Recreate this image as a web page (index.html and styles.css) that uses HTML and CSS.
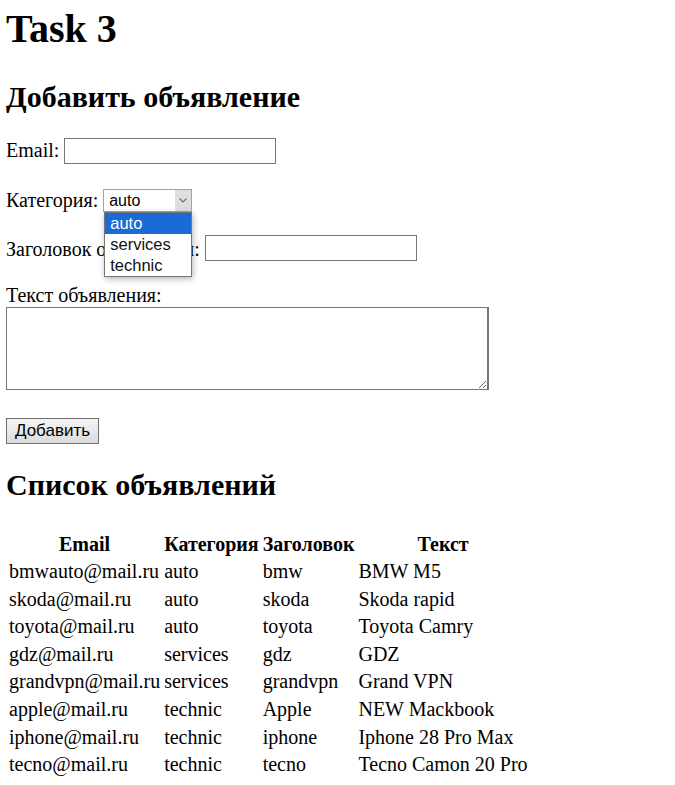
FILE: index.html
```html
<!DOCTYPE html>
<html lang="ru">
<head>
<meta charset="utf-8">
<title>Task 3</title>
<link rel="stylesheet" href="styles.css">
</head>
<body>
<h1 class="page-title">Task 3</h1>
<h2 class="section-title section-title--form">Добавить объявление</h2>
<form class="ad-form">
  <div class="form-row form-row--email">
    <label class="form-label form-label--email">Email:</label>
    <input class="text-input" type="text">
  </div>
  <div class="form-row form-row--category">
    <label class="form-label">Категория:</label>
    <div class="fake-select">
      <span class="fake-select__value">auto</span>
      <span class="fake-select__arrow">
        <svg width="8" height="5" viewBox="0 0 8 5"><path d="M0.5 0.5 L4 4 L7.5 0.5" fill="none" stroke="#6d6d6d" stroke-width="1.1"/></svg>
      </span>
      <ul class="dropdown">
        <li class="dropdown__item dropdown__item--active">auto</li>
        <li class="dropdown__item">services</li>
        <li class="dropdown__item">technic</li>
      </ul>
    </div>
  </div>
  <div class="form-row form-row--heading">
    <label class="form-label form-label--heading">Заголовок объявления:</label>
    <input class="text-input" type="text">
  </div>
  <label class="block-label">Текст объявления:</label>
  <textarea class="text-area"></textarea>
  <button class="submit-btn" type="button">Добавить</button>
</form>
<h2 class="section-title section-title--list">Список объявлений</h2>
<table class="ads-table">
  <thead>
    <tr><th>Email</th><th>Категория</th><th>Заголовок</th><th>Текст</th></tr>
  </thead>
  <tbody>
    <tr><td>bmwauto@mail.ru</td><td>auto</td><td>bmw</td><td>BMW M5</td></tr>
    <tr><td>skoda@mail.ru</td><td>auto</td><td>skoda</td><td>Skoda rapid</td></tr>
    <tr><td>toyota@mail.ru</td><td>auto</td><td>toyota</td><td>Toyota Camry</td></tr>
    <tr><td>gdz@mail.ru</td><td>services</td><td>gdz</td><td>GDZ</td></tr>
    <tr><td>grandvpn@mail.ru</td><td>services</td><td>grandvpn</td><td>Grand VPN</td></tr>
    <tr><td>apple@mail.ru</td><td>technic</td><td>Apple</td><td>NEW Mackbook</td></tr>
    <tr><td>iphone@mail.ru</td><td>technic</td><td>iphone</td><td>Iphone 28 Pro Max</td></tr>
    <tr><td>tecno@mail.ru</td><td>technic</td><td>tecno</td><td>Tecno Camon 20 Pro</td></tr>
  </tbody>
</table>
</body>
</html>
```
FILE: styles.css
```css
html, body {
  background: #ffffff;
}
body {
  margin: 0;
  padding: 0 6px;
  font-family: "Liberation Serif", "Times New Roman", serif;
  font-size: 20px;
  color: #000;
}
.page-title {
  margin: 6px 0 0;
  font-size: 40px;
  line-height: 46px;
  font-weight: bold;
}
.section-title {
  margin: 0;
  font-size: 30px;
  line-height: 34px;
  font-weight: bold;
}
.section-title--form {
  margin-top: 28px;
}
.section-title--list {
  margin-top: 24px;
}
.ad-form {
  display: flex;
  flex-direction: column;
  align-items: flex-start;
  margin-top: 24px;
}
.form-row {
  display: flex;
  align-items: flex-start;
  gap: 5px;
}
.form-row--category {
  margin-top: 25px;
}
.form-row--heading {
  margin-top: 23px;
}
.form-label {
  line-height: 22px;
  white-space: nowrap;
}
.form-label--email {
  margin-top: 1px;
}
.form-label--heading {
  margin-top: 3px;
}
.text-input {
  box-sizing: border-box;
  width: 212px;
  height: 26px;
  margin: 0;
  padding: 0 3px;
  border: 1px solid #767676;
  border-radius: 0;
  background: #fff;
  font: 16px "Liberation Sans", Arial, sans-serif;
}
.fake-select {
  position: relative;
  box-sizing: border-box;
  width: 89px;
  height: 23px;
  border: 1px solid #7aaed3;
  background: #fff;
  display: flex;
  align-items: center;
  font: 16px/21px "Liberation Sans", Arial, sans-serif;
}
.fake-select__value {
  flex: 1;
  padding-left: 5px;
}
.fake-select__arrow {
  width: 16px;
  height: 21px;
  background: #dedede;
  display: flex;
  align-items: center;
  justify-content: center;
}
.dropdown {
  position: absolute;
  left: 0;
  top: 22px;
  z-index: 2;
  box-sizing: border-box;
  width: 88px;
  margin: 0;
  padding: 0;
  list-style: none;
  background: #fff;
  border: 1px solid #767676;
  box-shadow: 1px 2px 6px rgba(0, 0, 0, 0.3);
}
.dropdown__item {
  height: 21px;
  padding-left: 5px;
  color: #111;
  font: 16.5px/20px "Liberation Sans", Arial, sans-serif;
}
.dropdown__item--active {
  background: #1c6ad6;
  color: #fff;
}
.block-label {
  margin-top: 23px;
  line-height: 22px;
}
.text-area {
  display: block;
  box-sizing: border-box;
  width: 483px;
  height: 83px;
  margin: 1px 0 0;
  padding: 2px;
  border: 1px solid #767676;
  border-right-width: 2px;
  border-radius: 0;
  font: 16px "Liberation Mono", monospace;
}
.submit-btn {
  box-sizing: border-box;
  margin-top: 28px;
  width: 93px;
  height: 26px;
  padding: 0;
  border: 1px solid #707070;
  border-radius: 0;
  background: linear-gradient(#f4f4f4, #dcdcdc);
  font: 17px/24px "Liberation Sans", Arial, sans-serif;
  color: #000;
}
.ads-table {
  margin-top: 27.5px;
  border-spacing: 2px;
  font-size: 20px;
}
.ads-table th,
.ads-table td {
  padding: 1px;
  line-height: 23.6px;
  white-space: nowrap;
}
.ads-table th {
  text-align: center;
  font-weight: bold;
}
.ads-table td {
  text-align: left;
}
```
